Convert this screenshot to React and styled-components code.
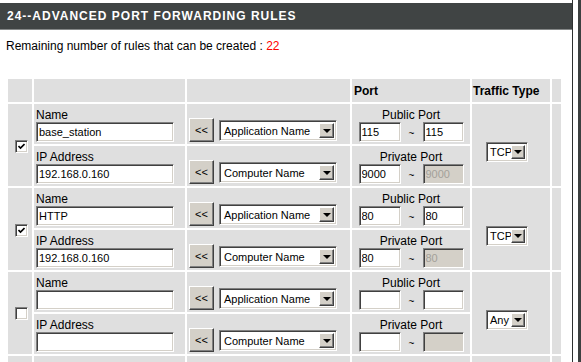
import styled, { createGlobalStyle } from "styled-components";

const GlobalStyle = createGlobalStyle`
  html, body {
    margin: 0;
    padding: 0;
    background: #ffffff;
    overflow: hidden;
  }
  body {
    font-family: "Liberation Sans", Arial, sans-serif;
  }
`;

const Page = styled.div`
  display: flex;
  height: 362px;
  overflow: hidden;
`;

const Panel = styled.div`
  width: 572px;
  border-right: 1px solid #2e3131;
  padding-top: 3px;
  overflow: hidden;
`;

const Gutter = styled.div`
  width: 5px;
`;

const FrameBar = styled.div`
  flex: 1;
  background: #3c4040;
`;

const Title = styled.div`
  height: 26px;
  background: #404444;
  border-bottom: 1px solid #858888;
  color: #ffffff;
  font-weight: bold;
  font-size: 12px;
  letter-spacing: 1px;
  line-height: 26px;
  padding-left: 7px;
  white-space: nowrap;
`;

const Remaining = styled.div`
  font-size: 12px;
  color: #000;
  padding: 9px 0 0 6px;
  height: 37px;
  line-height: 14px;
  box-sizing: border-box;
  margin-bottom: 10px;

  span {
    color: #ff0000;
  }
`;

const Table = styled.table`
  border-collapse: separate;
  border-spacing: 2px;
  table-layout: fixed;
  margin-left: 6px;
  width: 557px;

  td {
    background: #dfdfdf;
    padding: 0;
    vertical-align: top;
  }
`;

const HeadCell = styled.td`
  height: 23px;
  font-weight: bold;
  font-size: 12px;
  vertical-align: middle !important;
  padding-left: ${(p) => p.$pad || 0}px !important;
  white-space: nowrap;
`;

const Stack = styled.div`
  height: 40px;
  display: flex;
  flex-direction: column;
  justify-content: flex-end;
  padding: 0 2px 2px;
  box-sizing: border-box;
  text-align: ${(p) => (p.$center ? "center" : "left")};
`;

const Label = styled.div`
  font-size: 12px;
  line-height: 14px;
  color: #000;
  white-space: nowrap;
`;

const TextInput = styled.input`
  box-sizing: border-box;
  width: ${(p) => p.$w}px;
  height: 20px;
  margin: 0;
  padding: 0 2px;
  font-family: "Liberation Sans", Arial, sans-serif;
  font-size: 11px;
  color: #000;
  background: #ffffff;
  border-top: 1px solid #808080;
  border-left: 1px solid #808080;
  border-bottom: 1px solid #ffffff;
  border-right: 1px solid #ffffff;
  box-shadow: inset 1px 1px 0 #404040, inset -1px -1px 0 #d4d0c8;
  outline: none;

  &:disabled {
    background: #d4d0c8;
    color: #a3a09a;
  }
`;

const PickRow = styled.div`
  height: 40px;
  display: flex;
  align-items: flex-end;
  padding: 0 0 2px 2px;
  box-sizing: border-box;
  gap: 5px;
`;

const ArrowButton = styled.button`
  width: 25px;
  height: 24px;
  margin: 0;
  padding: 0 0 1px;
  background: #d4d0c8;
  font-family: "Liberation Sans", Arial, sans-serif;
  font-size: 11px;
  color: #000;
  border-top: 1px solid #ffffff;
  border-left: 1px solid #ffffff;
  border-bottom: 1px solid #404040;
  border-right: 1px solid #404040;
  box-shadow: inset -1px -1px 0 #808080;
`;

const SelectBox = styled.div`
  box-sizing: border-box;
  width: ${(p) => p.$w}px;
  height: ${(p) => p.$h || 21}px;
  margin-bottom: ${(p) => p.$mb || 0}px;
  display: flex;
  align-items: center;
  background: #ffffff;
  border-top: 1px solid #808080;
  border-left: 1px solid #808080;
  border-bottom: 1px solid #ffffff;
  border-right: 1px solid #ffffff;
  box-shadow: inset 1px 1px 0 #404040, inset -1px -1px 0 #d4d0c8;
  padding: 2px 2px 2px ${(p) => p.$pl || 4}px;
  font-size: 11px;
  color: #000;
  white-space: nowrap;
`;

const SelectText = styled.span`
  flex: 1;
  min-width: 0;
`;

const DropButton = styled.span`
  flex: none;
  width: ${(p) => p.$w || 15}px;
  height: 100%;
  box-sizing: border-box;
  display: flex;
  align-items: center;
  justify-content: center;
  background: #d4d0c8;
  border-top: 1px solid #ffffff;
  border-left: 1px solid #ffffff;
  border-bottom: 1px solid #404040;
  border-right: 1px solid #404040;
  box-shadow: inset -1px -1px 0 #808080;

  &::after {
    content: "";
    width: 0;
    height: 0;
    border-left: 4px solid transparent;
    border-right: 4px solid transparent;
    border-top: 4px solid #000;
  }
`;

const PortRow = styled.div`
  display: flex;
  justify-content: center;
  align-items: center;
`;

const Tilde = styled.span`
  width: 22px;
  text-align: center;
  font-size: 10px;
  padding-top: 2px;
  color: #000;
`;

const CheckCell = styled.td`
  vertical-align: middle !important;
  text-align: center;
`;

const Check = styled.span`
  display: inline-flex;
  align-items: center;
  justify-content: center;
  box-sizing: border-box;
  width: 13px;
  height: 13px;
  margin: 4px 0 0 2px;
  background: #ffffff;
  border-top: 1px solid #808080;
  border-left: 1px solid #808080;
  border-bottom: 1px solid #ffffff;
  border-right: 1px solid #ffffff;
  box-shadow: inset 1px 1px 0 #404040, inset -1px -1px 0 #d4d0c8;
`;

const TrafficCell = styled.td`
  vertical-align: middle !important;
`;

const TrafficWrap = styled.div`
  display: flex;
  justify-content: center;
  padding: 14px 8px 0 0;
`;

const rules = [
  { on: true, name: "base_station", ip: "192.168.0.160", pub: ["115", "115"], priv: ["9000", "9000"], type: "TCP" },
  { on: true, name: "HTTP", ip: "192.168.0.160", pub: ["80", "80"], priv: ["80", "80"], type: "TCP" },
  { on: false, name: "", ip: "", pub: ["", ""], priv: ["", ""], type: "Any" },
  { on: false, name: "", ip: "", pub: ["", ""], priv: ["", ""], type: "Any" },
];

const Select = ({ w, h, mb, pl, bw, text }) => (
  <SelectBox $w={w} $h={h} $mb={mb} $pl={pl}>
    <SelectText>{text}</SelectText>
    <DropButton $w={bw} />
  </SelectBox>
);

const Picker = ({ text }) => (
  <PickRow>
    <ArrowButton>&lt;&lt;</ArrowButton>
    <Select w={118} mb={1} text={text} />
  </PickRow>
);

const Ports = ({ label, values, lock }) => (
  <Stack $center>
    <Label>{label}</Label>
    <PortRow>
      <TextInput $w={42} defaultValue={values[0]} />
      <Tilde>~</Tilde>
      <TextInput $w={41} defaultValue={values[1]} disabled={lock} />
    </PortRow>
  </Stack>
);

const Rule = ({ rule }) => (
  <>
    <tr>
      <CheckCell rowSpan={2}>
        <Check>
          {rule.on && (
            <svg width="7" height="7" viewBox="0 0 7 7">
              <path d="M0.5 3 L2.5 5 L6.5 1" fill="none" stroke="#000" strokeWidth="1.6" />
            </svg>
          )}
        </Check>
      </CheckCell>
      <td>
        <Stack>
          <Label>Name</Label>
          <TextInput $w={138} defaultValue={rule.name} />
        </Stack>
      </td>
      <td>
        <Picker text="Application Name" />
      </td>
      <td>
        <Ports label="Public Port" values={rule.pub} />
      </td>
      <TrafficCell rowSpan={2}>
        <TrafficWrap>
          <Select w={42} h={20} pl={3} bw={14} text={rule.type} />
        </TrafficWrap>
      </TrafficCell>
      <td rowSpan={2} />
    </tr>
    <tr>
      <td>
        <Stack>
          <Label>IP Address</Label>
          <TextInput $w={138} defaultValue={rule.ip} />
        </Stack>
      </td>
      <td>
        <Picker text="Computer Name" />
      </td>
      <td>
        <Ports label="Private Port" values={rule.priv} lock />
      </td>
    </tr>
  </>
);

export default function App() {
  return (
    <Page>
      <GlobalStyle />
      <Panel>
        <Title>24--ADVANCED PORT FORWARDING RULES</Title>
        <Remaining>
          Remaining number of rules that can be created : <span>22</span>
        </Remaining>
        <Table>
          <colgroup>
            <col style={{ width: 24 }} />
            <col style={{ width: 151 }} />
            <col style={{ width: 163 }} />
            <col style={{ width: 118 }} />
            <col style={{ width: 78 }} />
            <col style={{ width: 9 }} />
          </colgroup>
          <tbody>
            <tr>
              <HeadCell />
              <HeadCell />
              <HeadCell />
              <HeadCell $pad={2}>Port</HeadCell>
              <HeadCell $pad={1}>Traffic Type</HeadCell>
              <HeadCell />
            </tr>
            {rules.map((r, i) => (
              <Rule key={i} rule={r} />
            ))}
          </tbody>
        </Table>
      </Panel>
      <Gutter />
      <FrameBar />
    </Page>
  );
}
